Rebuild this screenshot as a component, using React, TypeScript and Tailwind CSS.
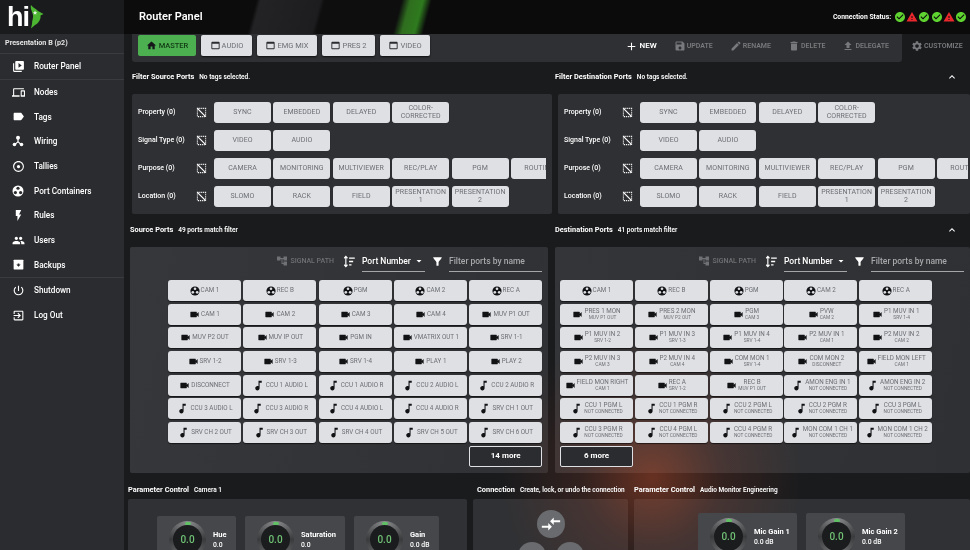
import type { ReactNode } from "react";
import {
  MdAdd,
  MdAdjust,
  MdAccountTree,
  MdArrowDropDown,
  MdCheckCircle,
  MdCompareArrows,
  MdDelete,
  MdDevices,
  MdEdit,
  MdExitToApp,
  MdExpandLess,
  MdFileUpload,
  MdFilterAlt,
  MdFlashOn,
  MdHome,
  MdLabel,
  MdMusicNote,
  MdPeople,
  MdPowerSettingsNew,
  MdSave,
  MdSettings,
  MdVideoLibrary,
  MdVideocam,
  MdWarning,
  MdWebAsset,
} from "react-icons/md";

type Kind = "reel" | "cam" | "note";

function ReelIcon({ className, hole = "#dfe0e4" }: { className?: string; hole?: string }) {
  return (
    <svg viewBox="0 0 24 24" className={className}>
      <circle cx="12" cy="12" r="11" fill="currentColor" />
      <circle cx="12" cy="6.5" r="3.2" fill={hole} />
      <circle cx="6.8" cy="15.2" r="3.2" fill={hole} />
      <circle cx="17.2" cy="15.2" r="3.2" fill={hole} />
    </svg>
  );
}

function BackupIcon({ className }: { className?: string }) {
  return (
    <svg viewBox="0 0 24 24" className={className}>
      <path d="M4 3h16a1 1 0 0 1 1 1v16a1 1 0 0 1-1 1H4a1 1 0 0 1-1-1V4a1 1 0 0 1 1-1z" fill="currentColor" />
      <path d="M8 12h2.5v-2h3v2H16l-4 4z" fill="#2b2c2f" />
    </svg>
  );
}

function WiringIcon({ className }: { className?: string }) {
  return (
    <svg viewBox="0 0 24 24" className={className} fill="currentColor">
      <circle cx="12" cy="5.5" r="4" />
      <circle cx="5" cy="19" r="3.6" />
      <circle cx="19" cy="19" r="3.6" />
      <path d="M10.8 8h2.4v5l5 4.4-1.6 1.8L12 15.2l-4.6 4-1.6-1.8 5-4.4z" />
    </svg>
  );
}

function ClearIcon() {
  return (
    <svg viewBox="0 0 16 16" className="h-[11px] w-[11px] shrink-0 text-white">
      <rect x="2" y="2" width="12" height="12" fill="none" stroke="currentColor" strokeWidth="1.5" strokeDasharray="1.6 1.2" />
      <path d="M2 2l12 12" stroke="currentColor" strokeWidth="1.8" />
    </svg>
  );
}

function SortIcon() {
  return (
    <svg viewBox="0 0 16 16" className="h-[13px] w-[13px] text-white">
      <path d="M3.5 2v12M1.5 4l2-2.2 2 2.2M1.5 12l2 2.2 2-2.2" fill="none" stroke="currentColor" strokeWidth="1.4" />
      <path d="M7.5 3h7v1.6h-7zM7.5 7.2h5v1.6h-5zM7.5 11.4h3v1.6h-3z" fill="currentColor" />
    </svg>
  );
}

function Logo() {
  return (
    <div className="flex h-[34px] items-center pl-[7px]">
      <span className="[font-family:'Liberation_Sans',sans-serif] text-[27px] leading-none font-bold tracking-[-1px] text-white">
        hi
      </span>
      <svg viewBox="0 0 14 24" className="ml-[1px] h-[24px] w-[14px]">
        <path
          d="M1 0C2 2 5 3 8 6L13.5 9 10.5 10.5C11 14 9 18 5 20L1 23.5 2 19C2 15 3.5 13 3 10 2 6 0 3 1 0Z"
          fill="#4cb531"
        />
        <path d="M5 5.5l.7 1.4 1.5.2-1.1 1 .3 1.5-1.4-.7-1.3.7.3-1.5-1-1 1.4-.2z" fill="#e8f5e0" />
      </svg>
    </div>
  );
}

const navTop = [
  { label: "Nodes", icon: <MdDevices className="h-[13px] w-[13px]" /> },
  { label: "Tags", icon: <MdLabel className="h-[13px] w-[13px]" /> },
  { label: "Wiring", icon: <WiringIcon className="h-[12px] w-[12px]" /> },
  { label: "Tallies", icon: <MdAdjust className="h-[13px] w-[13px]" /> },
  { label: "Port Containers", icon: <ReelIcon hole="#2b2c2f" className="h-[12px] w-[12px]" /> },
  { label: "Rules", icon: <MdFlashOn className="h-[13px] w-[13px]" /> },
  { label: "Users", icon: <MdPeople className="h-[13px] w-[13px]" /> },
  { label: "Backups", icon: <BackupIcon className="h-[13px] w-[13px]" /> },
];

function NavRow({ icon, label }: { icon: ReactNode; label: string }) {
  return (
    <div className="flex h-[24.7px] items-center text-white">
      <div className="flex w-[34px] justify-center pl-[2px]">{icon}</div>
      <span className="text-[8.2px] font-medium">{label}</span>
    </div>
  );
}

function Sidebar() {
  return (
    <aside className="w-[124px] shrink-0">
      <Logo />
      <div className="h-[516px] bg-[#2b2c2f]">
        <div className="flex h-[20px] items-center border-b border-[#3a3b3e] pl-[5px] text-[7.2px] font-bold text-[#e4e4e4]">
          Presentation B (p2)
        </div>
        <div className="border-b border-[#3a3b3e]">
          <NavRow icon={<MdVideoLibrary className="h-[13px] w-[13px]" />} label="Router Panel" />
        </div>
        <div className="border-b border-[#3a3b3e]">
          {navTop.map((n) => (
            <NavRow key={n.label} icon={n.icon} label={n.label} />
          ))}
        </div>
        <NavRow icon={<MdPowerSettingsNew className="h-[13px] w-[13px]" />} label="Shutdown" />
        <NavRow icon={<MdExitToApp className="h-[13px] w-[13px]" />} label="Log Out" />
      </div>
    </aside>
  );
}

const statuses = ["ok", "warn", "ok", "ok", "warn", "ok"];

function Header() {
  return (
    <header className="flex h-[34px] items-center justify-between bg-[linear-gradient(105deg,#0c0c0d_0%,#0c0c0d_15.5%,#232325_16%,#1d1d1f_23%,#0e0e0f_23.5%,#0e0e0f_32.5%,#2f6d1f_33.5%,#2e7a1e_35%,#0b0b0c_36%,#0b0b0c_100%)] pr-[3px] pl-[15px]">
      <h1 className="text-[11px] font-semibold text-white">Router Panel</h1>
      <div className="flex items-center gap-[3px]">
        <span className="text-[6.8px] font-bold text-white">Connection Status:</span>
        <div className="flex items-center gap-[0.2px]">
          {statuses.map((s, i) =>
            s === "ok" ? (
              <MdCheckCircle key={i} className="h-[12px] w-[12px] text-[#5fd32f]" />
            ) : (
              <MdWarning key={i} className="h-[12px] w-[12px] text-[#e8282c]" />
            ),
          )}
        </div>
      </div>
    </header>
  );
}

function Tab({ label, active, width }: { label: string; active?: boolean; width: string }) {
  if (active) {
    return (
      <div className={`flex h-[21px] items-center justify-center gap-[2px] rounded-[2px] bg-[#4caf50] text-[7.5px] font-medium text-[#123a14] ${width}`}>
        <MdHome className="h-[11px] w-[11px] text-[#15171a]" />
        {label}
      </div>
    );
  }
  return (
    <div className={`flex h-[21px] items-center justify-center gap-[1px] rounded-[2px] bg-[#dfe0e4] text-[7.5px] text-[#6b6e74] shadow-[0_1px_2px_rgba(0,0,0,0.7)] ${width}`}>
      <MdWebAsset className="h-[11px] w-[11px] text-[#2a2b2e]" />
      {label}
    </div>
  );
}

function Action({ icon, label, light }: { icon: ReactNode; label: string; light?: boolean }) {
  return (
    <div className={`flex items-center gap-[1px] font-semibold ${light ? "text-[8px] text-white" : "text-[7px] text-[#77797c]"}`}>
      {icon}
      {label}
    </div>
  );
}

function Toolbar() {
  return (
    <div className="flex h-[28px]">
      <div className="ml-[8px] flex h-[28px] w-[770px] rounded-b-[3px] bg-[#2f3033] pl-[6px]">
        <div className="flex h-[22px] gap-[5px] pt-[1px]">
          <Tab label="MASTER" active width="w-[58px]" />
          <Tab label="AUDIO" width="w-[51px]" />
          <Tab label="EMG MIX" width="w-[60px]" />
          <Tab label="PRES 2" width="w-[53px]" />
          <Tab label="VIDEO" width="w-[50px]" />
        </div>
        <div className="ml-auto flex h-[24px] items-center gap-[17px] pr-[13px]">
          <Action light label="NEW" icon={<MdAdd className="h-[13px] w-[13px]" />} />
          <Action label="UPDATE" icon={<MdSave className="h-[12px] w-[12px]" />} />
          <Action label="RENAME" icon={<MdEdit className="h-[12px] w-[12px]" />} />
          <Action label="DELETE" icon={<MdDelete className="h-[12px] w-[12px]" />} />
          <Action label="DELEGATE" icon={<MdFileUpload className="h-[12px] w-[12px]" />} />
        </div>
      </div>
      <div className="ml-[9px] flex h-[24px] items-center">
        <Action label="CUSTOMIZE" icon={<MdSettings className="h-[12px] w-[12px]" />} />
      </div>
    </div>
  );
}

function SectionTitle({ title, note, className }: { title: string; note: string; className?: string }) {
  return (
    <div className={`relative z-10 flex items-baseline gap-[5px] text-white ${className ?? ""}`}>
      <span className="text-[7.4px] font-bold whitespace-nowrap">{title}</span>
      <span className="text-[6.5px] font-semibold whitespace-nowrap">{note}</span>
    </div>
  );
}

const filterRows = [
  { label: "Property (0)", tags: ["SYNC", "EMBEDDED", "DELAYED", "COLOR-CORRECTED"] },
  { label: "Signal Type (0)", tags: ["VIDEO", "AUDIO"] },
  { label: "Purpose (0)", tags: ["CAMERA", "MONITORING", "MULTIVIEWER", "REC/PLAY", "PGM", "ROUTING"] },
  { label: "Location (0)", tags: ["SLOMO", "RACK", "FIELD", "PRESENTATION 1", "PRESENTATION 2"] },
];

function FilterPanel({ className }: { className: string }) {
  return (
    <div className={`flex h-[120px] flex-col gap-[7px] rounded-[2px] bg-[#2f3033] pt-[8px] pl-[6px] ${className}`}>
      {filterRows.map((r) => (
        <div key={r.label} className="flex h-[21px] items-center">
          <span className="w-[58px] shrink-0 text-[7px] font-medium text-white">{r.label}</span>
          <div className="flex w-[18px] shrink-0 justify-start">
            <ClearIcon />
          </div>
          <div className="flex min-w-0 flex-1 gap-[2.4px] overflow-hidden">
            {r.tags.map((t) => (
              <div
                key={t}
                className="flex h-[21px] w-[57px] shrink-0 items-center justify-center rounded-[3px] bg-[#dfe0e4] px-[2px] text-center text-[7px] leading-[7.5px] tracking-[0.1px] text-[#6b6e74] shadow-[0_1px_1px_rgba(0,0,0,0.6)]"
              >
                {t}
              </div>
            ))}
          </div>
        </div>
      ))}
    </div>
  );
}

function PortIcon({ kind }: { kind: Kind }) {
  if (kind === "reel") return <ReelIcon className="h-[10px] w-[10px] shrink-0 text-[#111214]" />;
  if (kind === "cam") return <MdVideocam className="h-[11px] w-[11px] shrink-0 text-[#111214]" />;
  return <MdMusicNote className="h-[13px] w-[13px] shrink-0 text-[#111214]" />;
}

type Port = [Kind, string, string?];

function PortButton({ port }: { port: Port }) {
  const [kind, name, sub] = port;
  return (
    <div className="relative z-10 flex h-[21px] items-center justify-center gap-[1px] overflow-hidden rounded-[3px] bg-[#dfe0e4] text-[#6b6e74] shadow-[0_1px_1px_rgba(0,0,0,0.6)]">
      <PortIcon kind={kind} />
      <div className="text-center whitespace-nowrap">
        <div className="text-[6.3px] leading-[7px]">{name}</div>
        {sub && <div className="text-[4.8px] leading-[6px]">{sub}</div>}
      </div>
    </div>
  );
}

function PortToolbar() {
  return (
    <div className="flex h-[33px] items-start justify-end pt-[8px] pr-[6px]">
      <div className="flex items-center gap-[2px] text-[7px] font-medium text-[#6f7174]">
        <MdAccountTree className="h-[12px] w-[12px]" />
        SIGNAL PATH
      </div>
      <div className="ml-[9px]">
        <SortIcon />
      </div>
      <div className="ml-[6px] flex h-[17px] w-[63px] items-start justify-between border-b border-[#a5a6a8] text-[8.5px] font-medium text-white">
        Port Number
        <MdArrowDropDown className="h-[12px] w-[12px]" />
      </div>
      <MdFilterAlt className="ml-[6px] h-[13px] w-[13px] text-white" />
      <div className="ml-[5px] flex h-[17px] w-[93px] items-start border-b border-[#a5a6a8] text-[8.5px] font-medium text-[#a5a7a9]">
        Filter ports by name
      </div>
    </div>
  );
}

const sourcePorts: Port[] = [
  ["reel", "CAM 1"], ["reel", "REC B"], ["reel", "PGM"], ["reel", "CAM 2"], ["reel", "REC A"],
  ["cam", "CAM 1"], ["cam", "CAM 2"], ["cam", "CAM 3"], ["cam", "CAM 4"], ["cam", "MUV P1 OUT"],
  ["cam", "MUV P2 OUT"], ["cam", "MUV IP OUT"], ["cam", "PGM IN"], ["cam", "VMATRIX OUT 1"], ["cam", "SRV 1-1"],
  ["cam", "SRV 1-2"], ["cam", "SRV 1-3"], ["cam", "SRV 1-4"], ["cam", "PLAY 1"], ["cam", "PLAY 2"],
  ["cam", "DISCONNECT"], ["note", "CCU 1 AUDIO L"], ["note", "CCU 1 AUDIO R"], ["note", "CCU 2 AUDIO L"], ["note", "CCU 2 AUDIO R"],
  ["note", "CCU 3 AUDIO L"], ["note", "CCU 3 AUDIO R"], ["note", "CCU 4 AUDIO L"], ["note", "CCU 4 AUDIO R"], ["note", "SRV CH 1 OUT"],
  ["note", "SRV CH 2 OUT"], ["note", "SRV CH 3 OUT"], ["note", "SRV CH 4 OUT"], ["note", "SRV CH 5 OUT"], ["note", "SRV CH 6 OUT"],
];

const nc = "NOT CONNECTED";
const destPorts: Port[] = [
  ["reel", "CAM 1"], ["reel", "REC B"], ["reel", "PGM"], ["reel", "CAM 2"], ["reel", "REC A"],
  ["cam", "PRES 1 MON", "MUV P1 OUT"], ["cam", "PRES 2 MON", "MUV P2 OUT"], ["cam", "PGM", "CAM 3"], ["cam", "PVW", "CAM 2"], ["cam", "P1 MUV IN 1", "SRV 1-4"],
  ["cam", "P1 MUV IN 2", "SRV 1-2"], ["cam", "P1 MUV IN 3", "SRV 1-3"], ["cam", "P1 MUV IN 4", "SRV 1-4"], ["cam", "P2 MUV IN 1", "CAM 1"], ["cam", "P2 MUV IN 2", "CAM 2"],
  ["cam", "P2 MUV IN 3", "CAM 3"], ["cam", "P2 MUV IN 4", "CAM 4"], ["cam", "COM MON 1", "SRV 1-4"], ["cam", "COM MON 2", "DISCONNECT"], ["cam", "FIELD MON LEFT", "CAM 1"],
  ["cam", "FIELD MON RIGHT", "CAM 1"], ["cam", "REC A", "SRV 1-2"], ["cam", "REC B", "MUV P1 OUT"], ["note", "AMON ENG IN 1", nc], ["note", "AMON ENG IN 2", nc],
  ["note", "CCU 1 PGM L", nc], ["note", "CCU 1 PGM R", nc], ["note", "CCU 2 PGM L", nc], ["note", "CCU 2 PGM R", nc], ["note", "CCU 3 PGM L", nc],
  ["note", "CCU 3 PGM R", nc], ["note", "CCU 4 PGM L", nc], ["note", "CCU 4 PGM R", nc], ["note", "MON COM 1 CH 1", nc], ["note", "MON COM 1 CH 2", nc],
];

function MoreButton({ label, className }: { label: string; className?: string }) {
  return (
    <div className={`relative z-10 flex h-[21px] items-center justify-center rounded-[2px] border border-[#dfe0e4] bg-[#2b2c2f] text-[8px] font-bold text-white ${className ?? ""}`}>
      {label}
    </div>
  );
}

function Knob({ label, reading, width }: { label: string; reading: string; width: string }) {
  return (
    <div className={`relative z-10 flex h-[60px] items-start gap-[7px] rounded-[2px] bg-[#45474a] pt-[5px] pl-[12px] ${width}`}>
      <div className="relative flex h-[37px] w-[37px] shrink-0 items-center justify-center rounded-full bg-[conic-gradient(#8a8c8e,#3a3b3d,#77797b,#3a3b3d,#8a8c8e)]">
        <div className="flex h-[29px] w-[29px] items-center justify-center rounded-full bg-[#1b1c1e] text-[10px] font-medium text-[#6fc174]">
          0.0
        </div>
        <div className="absolute top-[1px] h-[2.5px] w-[6px] rounded-full bg-[#5fc163]" />
      </div>
      <div className="pt-[8px] text-white">
        <div className="text-[7.5px] leading-[11px] font-bold whitespace-nowrap">{label}</div>
        <div className="text-[6.8px] leading-[11px] font-medium whitespace-nowrap">{reading}</div>
      </div>
    </div>
  );
}

export default function App() {
  return (
    <div className="relative flex h-[550px] w-[970px] overflow-hidden bg-[#1a1b1d] [font-family:Roboto,sans-serif] blur-[0.35px]">
      <Sidebar />
      <main className="min-w-0 flex-1">
        <Header />
        <Toolbar />

        <div className="mt-[9px] flex h-[12px] items-center">
          <SectionTitle className="ml-[8px] w-[423px]" title="Filter Source Ports" note="No tags selected." />
          <SectionTitle title="Filter Destination Ports" note="No tags selected." />
          <MdExpandLess className="mr-[12px] ml-auto h-[12px] w-[12px] text-white" />
        </div>
        <div className="mt-[11px] flex gap-[6px]">
          <FilterPanel className="ml-[8px] w-[420px] pr-[6px]" />
          <FilterPanel className="w-[412px] pr-[2px]" />
        </div>

        <div className="mt-[10px] flex h-[12px] items-center">
          <SectionTitle className="ml-[6px] w-[425px]" title="Source Ports" note="49 ports match filter" />
          <SectionTitle title="Destination Ports" note="41 ports match filter" />
          <MdExpandLess className="mr-[12px] ml-auto h-[12px] w-[12px] text-white" />
        </div>
        <div className="mt-[11px] flex gap-[7px]">
          <section className="ml-[6px] h-[226px] w-[418px] rounded-[2px] bg-[linear-gradient(100deg,#36373a,#303134)]">
            <PortToolbar />
            <div className="ml-[38px] grid grid-cols-[repeat(5,73px)] gap-x-[2.3px] gap-y-[2.7px]">
              {sourcePorts.map((p, i) => (
                <PortButton key={i} port={p} />
              ))}
              <MoreButton className="col-start-5" label="14 more" />
            </div>
          </section>
          <section className="h-[226px] w-[415px] rounded-[2px] bg-[linear-gradient(100deg,#343538,#2f3033)]">
            <PortToolbar />
            <div className="ml-[5px] grid grid-cols-[repeat(5,73px)] gap-x-[1.8px] gap-y-[2.7px]">
              {destPorts.map((p, i) => (
                <PortButton key={i} port={p} />
              ))}
              <MoreButton label="6 more" />
            </div>
          </section>
        </div>

        <div className="mt-[11px] flex h-[12px] items-center">
          <SectionTitle className="ml-[4px] w-[349px]" title="Parameter Control" note="Camera 1" />
          <SectionTitle className="w-[157px]" title="Connection" note="Create, lock, or undo the connection" />
          <SectionTitle title="Parameter Control" note="Audio Monitor Engineering" />
        </div>
        <div className="mt-[3px] flex h-[60px] gap-[6px]">
          <section className="ml-[4px] flex h-[60px] w-[339px] gap-[9px] rounded-t-[2px] bg-[#303134] pt-[17px] pl-[29px]">
            <Knob label="Hue" reading="0.0" width="w-[79px]" />
            <Knob label="Saturation" reading="0.0" width="w-[100px]" />
            <Knob label="Gain" reading="0.0 dB" width="w-[85px]" />
          </section>
          <section className="flex h-[60px] w-[155px] flex-col items-center overflow-hidden rounded-t-[2px] bg-[#303134] pt-[11px]">
            <div className="relative z-10 flex h-[28px] w-[28px] shrink-0 items-center justify-center rounded-full bg-[#6a6b6e] text-white">
              <MdCompareArrows className="h-[22px] w-[22px]" />
            </div>
            <div className="relative z-10 mt-[4px] flex shrink-0 gap-[10px]">
              <div className="h-[28px] w-[28px] rounded-full bg-[#6a6b6e]" />
              <div className="h-[28px] w-[28px] rounded-full bg-[#6a6b6e]" />
            </div>
          </section>
          <section className="flex h-[60px] w-[336px] gap-[9px] rounded-t-[2px] bg-[#303134] pt-[14px] pl-[64px]">
            <Knob label="Mic Gain 1" reading="0.0 dB" width="w-[99px]" />
            <Knob label="Mic Gain 2" reading="0.0 dB" width="w-[99px]" />
          </section>
        </div>
      </main>
      <div className="pointer-events-none absolute inset-0 bg-[radial-gradient(circle_at_652px_478px,rgba(210,80,40,0.42),rgba(190,70,40,0.15)_70px,transparent_150px)]" />
    </div>
  );
}
